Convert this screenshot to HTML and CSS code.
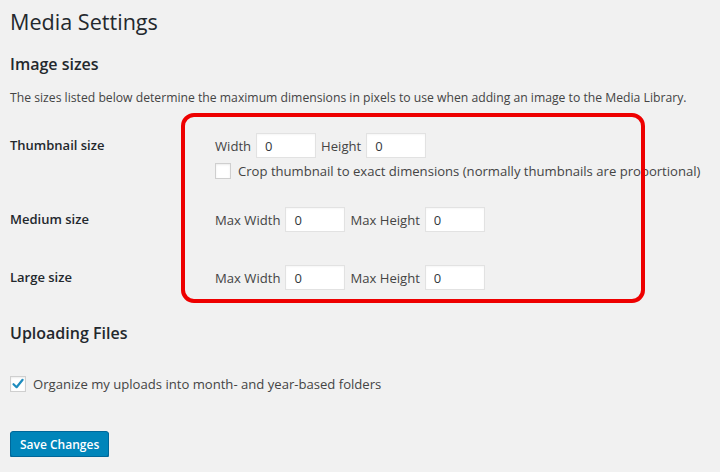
FILE: index.html
```html
<!DOCTYPE html>
<html>
<head>
  <meta charset="utf-8">
  <title>Media Settings</title>
  <link rel="stylesheet" href="styles.css">
</head>
<body>

<div class="wrap">
  <h1>Media Settings</h1>

  <h2>Image sizes</h2>
  <p class="desc">The sizes listed below determine the maximum dimensions in pixels to use when adding an image to the Media Library.</p>

  <div class="sizes">
    <div class="row row-thumb">
      <div class="label">Thumbnail size</div>
      <div class="fields">
        <div class="line">
          <span>Width</span><input class="num" type="text" value="0">
          <span>Height</span><input class="num" type="text" value="0">
        </div>
        <label class="check"><span class="box"></span>Crop thumbnail to exact dimensions (normally thumbnails are proportional)</label>
      </div>
    </div>

    <div class="row row-medium">
      <div class="label">Medium size</div>
      <div class="fields">
        <div class="line">
          <span>Max Width</span><input class="num" type="text" value="0">
          <span>Max Height</span><input class="num" type="text" value="0">
        </div>
      </div>
    </div>

    <div class="row row-large">
      <div class="label">Large size</div>
      <div class="fields">
        <div class="line">
          <span>Max Width</span><input class="num" type="text" value="0">
          <span>Max Height</span><input class="num" type="text" value="0">
        </div>
      </div>
    </div>

    <!-- annotation drawn over the form -->
    <div class="highlight"></div>
  </div>

  <h2 class="upload-title">Uploading Files</h2>

  <label class="check check-upload">
    <span class="box checked">
      <svg width="14" height="14" viewBox="0 0 14 14"><path d="M2.5 7.2 L5.6 10.2 L11.6 2.8" fill="none" stroke="#1e8cbe" stroke-width="2.2" stroke-linecap="round" stroke-linejoin="round"/></svg>
    </span>Organize my uploads into month- and year-based folders
  </label>

  <div class="actions">
    <button class="save">Save Changes</button>
  </div>
</div>

</body>
</html>
```

FILE: styles.css
```css
body {
  margin: 0;
  background: #f1f1f1;
  font-family: "Open Sans", "Liberation Sans", sans-serif;
  color: #444;
  font-size: 12px;
}
.wrap {
  padding: 0 10px;
}
h1 {
  font-weight: normal;
  font-size: 21.6px;
  color: #23282d;
  margin: 0;
  padding-top: 8px;
  line-height: 28px;
}
h2 {
  font-weight: 600;
  font-size: 16px;
  color: #23282d;
  margin: 18px 0 0 0;
  line-height: 20px;
}
.desc {
  margin: 15px 0 0 0;
  line-height: 18px;
  font-size: 12.2px;
  color: #444;
}
.sizes {
  position: relative;
  margin-top: 26px;
}
.row {
  display: grid;
  grid-template-columns: 205px 1fr;
}
.label {
  font-weight: 600;
  font-size: 13px;
  color: #23282d;
  line-height: 25px;
}
.line {
  display: flex;
  align-items: center;
  height: 25px;
  font-size: 13.1px;
}
.line span {
  margin-right: 5px;
}
.num {
  width: 60px;
  height: 25px;
  box-sizing: border-box;
  border: 1px solid #e2e2e2;
  background: #fff;
  font-family: "Open Sans", "Liberation Sans", sans-serif;
  font-size: 13px;
  color: #32373c;
  padding: 0 8px;
  margin: 0 5px 0 0;
  box-shadow: inset 0 1px 2px rgba(0,0,0,0.04);
}
.check {
  display: flex;
  align-items: center;
  margin-top: 4px;
  color: #444;
  font-size: 13.1px;
}
.box {
  width: 16px;
  height: 16px;
  box-sizing: border-box;
  border: 1px solid #cfcfcf;
  background: #fff;
  margin-right: 7px;
  display: inline-flex;
  align-items: center;
  justify-content: center;
  box-shadow: inset 0 1px 2px rgba(0,0,0,0.08);
}
.row-medium {
  margin-top: 27px;
}
.row-large {
  margin-top: 33px;
}
.highlight {
  position: absolute;
  left: 171px;
  top: -20px;
  width: 456px;
  height: 182px;
  border: 4px solid #ee0000;
  border-radius: 13px;
}
.upload-title {
  margin-top: 33px;
}
.check-upload {
  margin-top: 32px;
  margin-left: 0;
}
.actions {
  margin-top: 38px;
}
.save {
  background: #0085ba;
  border: 1px solid #006799;
  border-radius: 3px;
  color: #fff;
  font-family: "Open Sans", "Liberation Sans", sans-serif;
  font-size: 12px;
  font-weight: 600;
  height: 26px;
  padding: 0 9px;
  box-shadow: 0 1px 0 #006799;
}
```
